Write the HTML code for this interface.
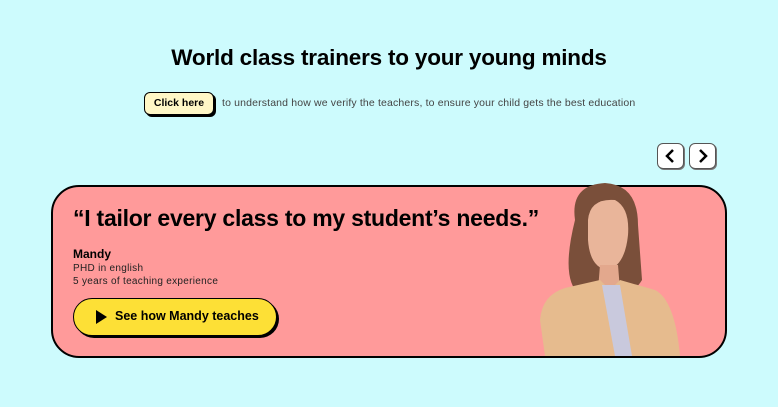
<!DOCTYPE html>
<html><head><style>
*{margin:0;padding:0;box-sizing:border-box}
body{width:778px;height:407px;background:#cdfbfd;font-family:"Liberation Sans",sans-serif;position:relative;overflow:hidden;color:#000}
h1{position:absolute;top:45px;left:0;width:778px;text-align:center;font-size:22.5px;font-weight:bold;letter-spacing:-0.2px}
.click{position:absolute;left:144px;top:92px;width:70px;height:23px;background:#fff7c6;border:1.5px solid #000;border-radius:6px;box-shadow:2px 2px 0 #000;font-size:10.5px;font-weight:bold;text-align:center;line-height:20px}
.sub{position:absolute;left:222px;top:97px;font-size:10.5px;color:#444;letter-spacing:0.15px}
.nav{position:absolute;top:143px;width:27px;height:26px;background:#fff;border:1px solid #555;border-radius:6px;box-shadow:1px 1px 0 #777}
.card{position:absolute;left:51px;top:185px;width:676px;height:173px;background:#ff9a9a;border:2px solid #000;border-radius:28px}
.q{position:absolute;left:73px;top:205px;font-size:23px;font-weight:bold;letter-spacing:-0.25px}
.name{position:absolute;left:73px;top:247px;font-size:12px;font-weight:bold}
.d{position:absolute;left:73px;font-size:10px;color:#222;letter-spacing:0.3px}
.btn{position:absolute;left:73px;top:298px;width:204px;height:38px;background:#fde036;border:1.5px solid #000;border-radius:20px;box-shadow:2px 2px 0 #000;font-size:12.5px;font-weight:bold;line-height:35px;padding-left:41px}
.btn:before{content:"";position:absolute;left:22px;top:11px;border-left:11px solid #000;border-top:7px solid transparent;border-bottom:7px solid transparent}
</style></head><body>
<h1>World class trainers to your young minds</h1>
<div class="click">Click here</div>
<div class="sub">to understand how we verify the teachers, to ensure your child gets the best education</div>
<div class="nav" style="left:657px"><svg width="25" height="24"><path d="M15 6 L9 12 L15 18" stroke="#000" stroke-width="2.5" fill="none"/></svg></div>
<div class="nav" style="left:689px"><svg width="25" height="24"><path d="M10 6 L16 12 L10 18" stroke="#000" stroke-width="2.5" fill="none"/></svg></div>
<div class="card"></div>
<svg style="position:absolute;left:520px;top:180px" width="180" height="178">
<path d="M55 40 Q50 5 85 3 Q118 5 118 45 L122 100 Q110 120 85 115 L60 115 Q40 100 55 40Z" fill="#7a4f3a"/>
<path d="M68 40 Q70 18 95 20 Q110 28 108 55 Q105 85 88 90 Q70 88 68 60Z" fill="#e9b59a"/>
<path d="M80 85 L98 85 L100 110 L78 110Z" fill="#e3a88d"/>
<path d="M20 140 Q22 115 45 108 L80 100 L90 110 L100 100 L135 110 Q155 120 160 176 L25 176Z" fill="#e6bb8e"/>
<path d="M82 105 L100 105 L112 176 L95 176Z" fill="#c9c9dd"/>
</svg>
<div class="q">“I tailor every class to my student’s needs.”</div>
<div class="name">Mandy</div>
<div class="d" style="top:263px">PHD in english</div>
<div class="d" style="top:276px">5 years of teaching experience</div>
<div class="btn">See how Mandy teaches</div>
</body></html>
